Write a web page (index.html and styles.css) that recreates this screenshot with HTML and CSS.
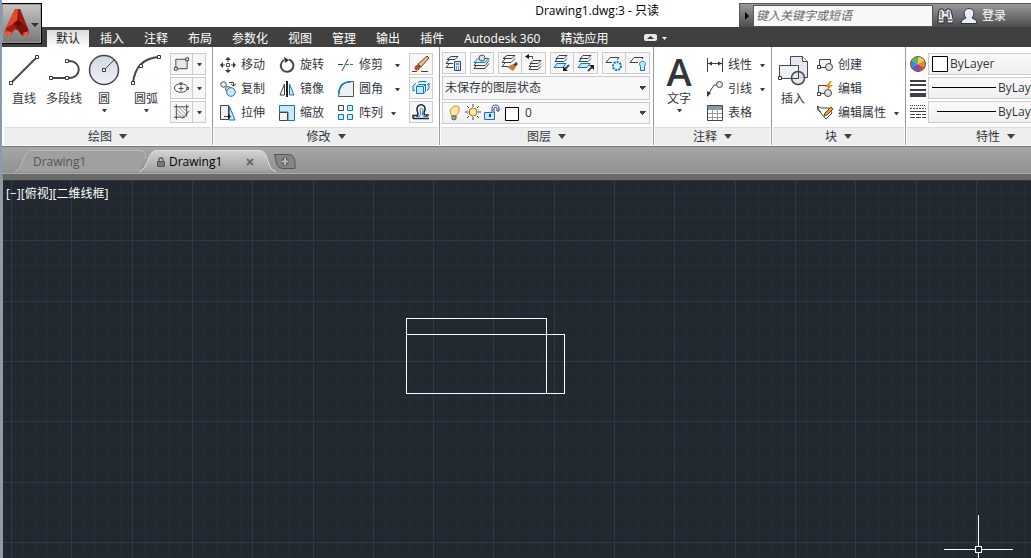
FILE: index.html
```html
<!DOCTYPE html>
<html lang="zh-CN">
<head>
<meta charset="utf-8">
<title>Drawing1.dwg:3 - 只读</title>
<link rel="stylesheet" href="styles.css">
</head>
<body>
<div class="window">
  <header class="top">
    <button class="app-button" aria-label="应用程序菜单">
      <svg width="38" height="38" viewBox="0 0 38 38">
        <path d="M13 4h5l8 20 1 4-3 3-5-1-3-5h-4l-3 5-4 1-2-4 1-4z" fill="#c22a18"/>
        <path d="M13 4h3l1 12-7 6-6 1z" fill="#df4a2c"/>
        <path d="M4 23l7-4 3-3 2 5-5 4-2 5-4-1-1-2z" fill="#a81c10"/>
        <path d="M16 4h2l8 20-8-5-3-4z" fill="#9b1a10"/>
        <path d="M16 16l9 6 2 5-2 3h-5l-4-5-3-3z" fill="#7c120b"/>
        <path d="M11 19l5-4 4 4-4 2z" fill="#5c0d08"/>
        <path d="M4 26l6 1-2 4-4-1zM21 28l6-2-2 5h-3z" fill="#f0583a"/>
        <path d="M29 18h8l-4 4z" fill="#2b323b"/>
      </svg>
    </button>
    <div class="titlebar">
      <div class="title">Drawing1.dwg:3 - 只读</div>
      <div class="infocenter">
        <button class="info-toggle" aria-label="折叠"><svg width="6" height="8"><path d="M1 0l4 4-4 4z" fill="#000"/></svg></button>
        <input class="search" type="text" aria-label="搜索" placeholder="键入关键字或短语">
        <button class="info-button" aria-label="查找"><svg width="16" height="16" viewBox="0 0 16 16"><path d="M2 2l2-1h2l1 2h2l1-2h2l2 1 2 9v4h-6V9H7v6H1v-4z" fill="#dfe5ee" stroke="#252a33"/><path d="M4 3v7M12 3v7M7 5h3M1 12h5M10 12h5" stroke="#252a33" fill="none"/></svg></button>
        <button class="info-button sign-in"><svg width="16" height="16" viewBox="0 0 16 16"><path d="M5 10C1 5 4 .5 8 .5S15 5 11 10l4 2 1 3.500H0L1 12z" fill="#e8edf5" stroke="#30343b"/></svg><span>登录</span></button>
      </div>
    </div>
    <nav class="ribbon-tabs">
      <button class="rtab active">默认</button><button class="rtab">插入</button><button class="rtab">注释</button><button class="rtab">布局</button><button class="rtab">参数化</button><button class="rtab">视图</button><button class="rtab">管理</button><button class="rtab">输出</button><button class="rtab">插件</button><button class="rtab">Autodesk 360</button><button class="rtab">精选应用</button>
      <button class="collapse" aria-label="最小化功能区"><svg width="26" height="8" viewBox="0 0 26 8"><rect width="13" height="7" rx="2" fill="#e3e6ec"/><path d="M3 5l3.500-3L10 5z" fill="#333"/><path d="M18 3h5l-2.500 3z" fill="#eef"/></svg></button>
    </nav>
  </header>

  <main class="ribbon">
    <section class="panel draw">
      <div class="body">
        <button class="big"><svg width="34" height="34" viewBox="0 0 34 34"><path d="M4 30L30 4" class="k"/><path d="M2.500 28.500h3v3h-3zM28.500 2.500h3v3h-3z" class="n"/></svg><span>直线</span></button>
        <button class="big"><svg width="34" height="34" viewBox="0 0 34 34"><path d="M4 25h18c13 0 13-17 0-17h-2" class="k"/><path d="M2.500 23.500h3v3h-3zM18.500 23.500h3v3h-3zM18.500 6.500h3v3h-3z" class="n"/></svg><span>多段线</span></button>
        <button class="big"><svg width="34" height="34" viewBox="0 0 34 34"><defs><linearGradient id="disc" x2="0" y2="1"><stop stop-color="#d3d7e0"/><stop offset="1" stop-color="#f0f2f6"/></linearGradient></defs><circle cx="17" cy="17" r="14.500" fill="url(#disc)" stroke="#45494f" stroke-width="1.500"/><path d="M17 17L27 7" class="t"/><path d="M15.500 15.500h3v3h-3z" class="n"/></svg><span>圆</span><i class="caret"></i></button>
        <button class="big wide"><svg width="34" height="34" viewBox="0 0 34 34"><path d="M4 30C6 12 16 5 30 4" class="k"/><path d="M2.500 28.500h3v3h-3zM10.500 11.500h3v3h-3zM28.500 2.500h3v3h-3z" class="n"/></svg><span>圆弧</span><i class="caret"></i></button>
        <div class="stack">
          <button class="split" aria-label="矩形"><svg width="18" height="16" viewBox="0 0 18 16"><path d="M3 3h12v10H3z" fill="#e2e6ed" stroke="#444"/><path d="M1.500 11.500h3v3h-3zM13.500 1.500h3v3h-3z" class="n"/></svg><i class="caret"></i></button>
          <button class="split" aria-label="椭圆"><svg width="18" height="16" viewBox="0 0 18 16"><ellipse cx="8.500" cy="8" rx="7" ry="4.500" class="t"/><path d="M6 8.500h5M8.500 6v5" class="t"/><path d="M7.500 2.500h2v2h-2zM14.500 7.500h2v2h-2z" class="n"/></svg><i class="caret"></i></button>
          <button class="split" aria-label="图案填充"><svg width="18" height="16" viewBox="0 0 18 16"><path d="M3.500 0v16M14.500 0v13M1 2.500h16M1 13.500h12M10 15l7-8" class="t"/><path d="M4 5l8 8M4 9l4 4M6 3l8 8M10 3l4 4" stroke="#888"/></svg><i class="caret"></i></button>
        </div>
      </div>
      <button class="foot">绘图<i class="down"></i></button>
    </section>

    <section class="panel modify">
      <div class="body">
        <div class="col"><button class="item"><svg width="16" height="16" viewBox="0 0 16 16"><path d="M6.500 6.500h3v3h-3zM8 3v2M8 11v2M3 8h2M11 8h2" class="t"/><path d="M8 0l3 3H5zM8 16l3-3H5zM0 8l3-3v6zM16 8l-3-3v6z" fill="#333"/></svg>移动</button>
        <button class="item"><svg width="16" height="16" viewBox="0 0 16 16"><circle cx="3.500" cy="3.500" r="2.800" fill="#e8ebf0" stroke="#555"/><circle cx="8" cy="8" r="2.500" fill="#e8ebf0" stroke="#555"/><circle cx="11" cy="11" r="4.300" class="b"/><path d="M9 1.500h4.500V5M11 3l2.500 2L16 3" class="t"/></svg>复制</button>
        <button class="item"><svg width="16" height="16" viewBox="0 0 16 16"><path d="M9.500 1.500L15 15H9z" class="b"/><path d="M.5.500h8v14h-8z" fill="#f0f2f5" stroke="#444"/><path d="M4 11.500h6" class="t"/><path d="M8 8.500l3 3-3 3z" fill="#222"/></svg>拉伸</button></div>
        <div class="col"><button class="item"><svg width="16" height="16" viewBox="0 0 16 16"><path d="M10 2.500a6.300 6.300 0 1 1-5 .5" class="k"/><path d="M5 0l5 3-4 3z" fill="#333"/></svg>旋转</button>
        <button class="item"><svg width="16" height="16" viewBox="0 0 16 16"><path d="M5.500 3v11H1z" class="t"/><path d="M10.500 3L15 14h-4.500z" class="b"/><path d="M8 0v16" stroke="#222" stroke-width="2"/></svg>镜像</button>
        <button class="item"><svg width="16" height="16" viewBox="0 0 16 16"><path d="M.5.500h15v15H9V7H.5z" class="b"/><path d="M.5 7.500h8v8h-8z" fill="#f2f3f5" stroke="#444"/></svg>缩放</button></div>
        <div class="col"><button class="item"><svg width="16" height="16" viewBox="0 0 16 16"><path d="M4 14L10 2M0 7.500h5" class="t"/><path d="M8 7.500h8" stroke="#0878c4" stroke-dasharray="3 1"/></svg>修剪<i class="caret push"></i></button>
        <button class="item"><svg width="16" height="16" viewBox="0 0 16 16"><path d="M.5 15.500Q.5.500 13 .5h2.500v15z" fill="#edf0f4" stroke="#555"/><path d="M.8 13Q1 1 13 .8" stroke="#0878c4" stroke-width="1.500" fill="none"/></svg>圆角<i class="caret push"></i></button>
        <button class="item"><svg width="16" height="16" viewBox="0 0 16 16"><path d="M.5.500h5v5h-5z" fill="#eee" stroke="#444"/><path d="M9.500.500h5v5h-5zM.5 9.500h5v5h-5zM9.500 9.500h5v5h-5z" class="b"/></svg>阵列<i class="caret near"></i></button></div>
        <div class="stack">
          <button class="square" aria-label="删除"><svg width="18" height="18" viewBox="0 0 18 18"><path d="M15 1l2 2-8 9-3-3z" fill="#e7bd83" stroke="#664b30"/><path d="M6 9l3 3-2 2-4-2z" fill="#4b5159"/><circle cx="5" cy="13" r="2.500" fill="#ce491b"/><path d="M0 16.500h5M9 16.500h7" class="t"/></svg></button>
          <button class="square" aria-label="分解"><svg width="18" height="18" viewBox="0 0 18 18"><path d="M4.500 7.500h7v7h-7zM4.500 7.500l2-2h7l-2 2M11.500 14.500l2-2v-7M3 11L1 12V7l3-3M6 3.500l2-1h6l-1 1M15 6l2-2v5l-2 3" class="b"/></svg></button>
          <button class="square" aria-label="偏移"><svg width="18" height="18" viewBox="0 0 18 18"><path d="M1 15.500h16M1 15.500v-3h3c3 0 2-3 1-5C4 0 14 0 13 7c-1 2-2 5 1 5h3" fill="none" stroke="#222" stroke-width="1.500"/><path d="M4 13.500h3c2-1 2-3 1-6 0-3 3-3 3 0-1 3-1 5 1 6h4" stroke="#0878c4" fill="none"/></svg></button>
        </div>
      </div>
      <button class="foot">修改<i class="down"></i></button>
    </section>

    <section class="panel layers">
      <div class="body">
        <div class="tools">
          <button class="square" aria-label="图层特性"><svg width="18" height="18" viewBox="0 0 18 18"><path d="M6 2.500h7l-3 3H2zM4 6l-3 3.500h7M4 10l-3 3.500h7" class="t"/><path d="M9.500 7.500h6v9h-6z" fill="#dce8f5" stroke="#284b73"/><path d="M11 10h3M11 13h1M13 13h1M11 15h1M13 15h1" stroke="#284b73"/></svg></button>
          <button class="square" aria-label="置为当前"><svg width="18" height="18" viewBox="0 0 18 18"><path d="M5 4.500h11l-4 4H1z" class="b"/><path d="M3 9l-2 2.500h11l4-5M3 12l-2 2.500h11l4-5" class="t"/><circle cx="9" cy="4" r="3" fill="#ddd" stroke="#555"/></svg></button>
          <div class="pair"><button class="square" aria-label="匹配图层"><svg width="18" height="18" viewBox="0 0 18 18"><path d="M6 1.500h8l-3 3H2zM4 5L1 8.500h9l4-4M4 9l-3 3.500h6" class="t"/><path d="M15 8l2 2-3 3-2-2z" fill="#53402f"/><path d="M12 10l3 3-3 4-6-4z" fill="#c77b31"/></svg></button>
          <button class="square" aria-label="上一个"><svg width="18" height="18" viewBox="0 0 18 18"><path d="M8 6.500h8l-3 3H5zM6 10l-2 2.500h9l3-3M6 13l-2 2.500h9l3-3M3 2.500h4.500V5" class="t"/><path d="M0 2.500L4 0v5z" fill="#111"/></svg></button></div>
          <div class="pair"><button class="square" aria-label="隔离"><svg width="18" height="18" viewBox="0 0 18 18"><path d="M6 1.500h8l-3 3H3zM4 5L2 7.500h9l3-3" class="t"/><path d="M4 9.500h9l-3 4H1z" class="b"/><path d="M16 11l-4 4" class="k"/><path d="M10 17v-5l5 5z" fill="#222"/></svg></button>
          <button class="square" aria-label="取消隔离"><svg width="18" height="18" viewBox="0 0 18 18"><path d="M6 1.500h8l-3 3H3zM4 5L2 7.500h9l3-3" class="t"/><path d="M4 9.500h9l-3 4H1z" class="b"/><path d="M11 17l4-4" class="k"/><path d="M17 11v5l-5-5z" fill="#222"/></svg></button></div>
          <div class="pair"><button class="square" aria-label="冻结"><svg width="18" height="18" viewBox="0 0 18 18"><path d="M7 8.500H1l4-5h9L12 6" class="t"/><circle cx="12" cy="12" r="4" fill="#dff2ff" stroke="#0878c4" stroke-width="2" stroke-dasharray="2 1"/></svg></button>
          <button class="square" aria-label="关闭"><svg width="18" height="18" viewBox="0 0 18 18"><path d="M9 8.500H1l4-5h9L13 5" class="t"/><path d="M11.500 12.500c-4-7 8-7 4 0v4h-4z" class="b"/></svg></button></div>
        </div>
        <select class="box state" aria-label="图层状态"><option>未保存的图层状态</option></select>
        <div class="box combo">
          <svg width="72" height="18" viewBox="0 0 72 18"><path d="M5 12C-2 3 14-2 12 6c0 3-2 4-3 6z" fill="#ffe89a" stroke="#b29548"/><path d="M5 12h4v3l-2 1-2-1z" fill="#aaa" stroke="#555"/><circle cx="26" cy="8" r="4" fill="#ffe698" stroke="#997733"/><path d="M26 0v3M26 13v3M18 8h3M31 8h3M20 2l2 2M30 12l2 2M32 2l-2 2M22 12l-2 2" class="t"/><path d="M37.500 8.500h10v7h-10z" class="b"/><path d="M45 9V4c0-4 7-4 7 0v3h-2V4c0-1-3-1-3 0v5" fill="#eef" stroke="#264764"/><path d="M43 10v3" stroke="#264764" stroke-width="2"/><path d="M58.500 3.500h13v13h-13z" fill="#fff" stroke="#000"/></svg>
          <select aria-label="图层"><option>0</option></select>
        </div>
      </div>
      <button class="foot">图层<i class="down"></i></button>
    </section>

    <section class="panel annotate">
      <div class="body">
        <button class="big"><b class="letter">A</b><span>文字</span><i class="caret"></i></button>
        <div class="col"><button class="item"><svg width="16" height="16" viewBox="0 0 16 16"><path d="M.5 1v14M15.500 1v14M1 6.500h14" class="t"/><path d="M1 6.500l4-2v4zM15 6.500l-4-2v4z" fill="#333"/></svg>线性<i class="caret push"></i></button>
        <button class="item"><svg width="16" height="16" viewBox="0 0 16 16"><circle cx="12.500" cy="3.500" r="3" fill="#e4e6eb" stroke="#444"/><path d="M9 4H7L2 12" class="t"/><path d="M0 16v-6l4 2z" fill="#333"/></svg>引线<i class="caret push"></i></button>
        <button class="item"><svg width="16" height="16" viewBox="0 0 16 16"><path d="M.5.500h15v15H.5z" fill="#fff" stroke="#444"/><path d="M1 1h14v3H1z" fill="#8299b2"/><path d="M1 4.500h14M1 8.500h14M1 12.500h14M5.500 4v11M10.500 4v11" stroke="#999"/></svg>表格</button></div>
      </div>
      <button class="foot">注释<i class="down"></i></button>
    </section>

    <section class="panel block">
      <div class="body">
        <button class="big"><svg width="34" height="34" viewBox="0 0 34 34"><path d="M14.500 3.500h12l5 5v16h-17z" fill="#e5e8ee" stroke="#45494f"/><path d="M26.500 3.500v5h5M3.500 12.500h19v13h-19z" fill="#edf0f4" stroke="#45494f"/><circle cx="22" cy="25" r="6.500" fill="#dfe4eb" fill-opacity=".8" stroke="#45494f" stroke-width="1.500"/><path d="M15 25.500h7.500V18" class="t"/><path d="M2.500 23.500h3v3h-3z" class="n"/></svg><span>插入</span></button>
        <div class="col"><button class="item"><svg width="16" height="16" viewBox="0 0 16 16"><path d="M2.500 2.500h11v8h-11z" fill="#edf0f4" stroke="#444"/><circle cx="12" cy="10" r="3.500" fill="#dfe4eb" stroke="#444"/><path d="M.5 8.500h3v3h-3z" class="n"/></svg>创建</button>
        <button class="item"><svg width="16" height="16" viewBox="0 0 16 16"><path d="M1.500 4.500h10v8h-10z" fill="#edf0f4" stroke="#444"/><circle cx="11" cy="12" r="3.500" fill="#dfe4eb" stroke="#444"/><path d="M13 0L8 6h4l-3 4 7-6h-4l3-4z" fill="#ef8b17"/><path d="M.5 11.500h3v3h-3z" class="n"/></svg>编辑</button>
        <button class="item"><svg width="16" height="16" viewBox="0 0 16 16"><path d="M0 1l4 2h8l3 5-6 6-6-7zM0 1l1 4 3 2" class="t"/><path d="M14 2l2 2-6 6-3 1 1-3z" fill="#ef9a28" stroke="#68431b"/></svg>编辑属性<i class="caret near"></i></button></div>
      </div>
      <button class="foot">块<i class="down"></i></button>
    </section>

    <section class="panel properties">
      <div class="body">
        <div class="prop"><svg width="18" height="18" viewBox="0 0 18 18"><path d="M9 9V1l7 4z" fill="#e1da44"/><path d="M9 9l7-4v8z" fill="#ee8630"/><path d="M9 9l7 4-7 4z" fill="#cf3e61"/><path d="M9 9v8l-7-4z" fill="#6a55bb"/><path d="M9 9l-7 4V5z" fill="#368cce"/><path d="M9 9L2 5l7-4z" fill="#65b94d"/><circle cx="9" cy="9" r="7.500" fill="none" stroke="#555"/></svg>
          <div class="box combo"><svg width="18" height="18"><path d="M1.500 1.500h15v15h-15z" fill="#fff" stroke="#000"/></svg><select aria-label="颜色"><option>ByLayer</option></select></div></div>
        <div class="prop"><svg width="18" height="18" viewBox="0 0 18 18"><path d="M1 2h16M1 6h16M1 11h16" stroke="#3d4045" stroke-width="2"/><path d="M1 16h16" stroke="#3d4045" stroke-width="4"/></svg>
          <div class="box combo"><svg width="66" height="18"><path d="M1 8.500h64" stroke="#000"/></svg><select aria-label="线宽"><option>ByLayer</option></select></div></div>
        <div class="prop"><svg width="18" height="18" viewBox="0 0 18 18"><path d="M1 2.500h16" stroke="#444" stroke-dasharray="1 1"/><path d="M1 5.500h16" stroke="#444" stroke-dasharray="2 1"/><path d="M1 8.500h16" stroke="#444"/><path d="M1 11.500h16M1 14.500h16" stroke="#444" stroke-dasharray="5 1"/></svg>
          <div class="box combo"><svg width="66" height="18"><path d="M6 8.500h59" stroke="#000"/></svg><select aria-label="线型"><option>ByLayer</option></select></div></div>
      </div>
      <button class="foot">特性<i class="down"></i></button>
    </section>
  </main>

  <nav class="doc-tabs">
    <button class="doc first"><svg class="shape" viewBox="0 0 134 24" preserveAspectRatio="none"><path d="M0 22.500C8 21 8 1.500 16 1.500h108q7 0 7 8l-8 13z" fill="#a0a0a0"/><path d="M0 22.500C8 21 8 1.500 16 1.500h108q7 0 7 8" fill="none" stroke="#bdbdbd"/></svg><span>Drawing1</span></button>
    <button class="doc current"><svg class="shape" viewBox="0 0 138 24" preserveAspectRatio="none"><defs><linearGradient id="tabfill" x2="0" y2="1"><stop stop-color="#d2d2d2"/><stop offset="1" stop-color="#a2a2a2"/></linearGradient></defs><path d="M0 22.500C9 21 9 1.500 17 1.500h104c9 0 6 19 16 21z" fill="url(#tabfill)"/><path d="M0 22.500C9 21 9 1.500 17 1.500h104c9 0 6 19 16 21" fill="none" stroke="#dedede"/></svg><svg width="8" height="10"><path d="M2 5V3c0-3 4-3 4 0v2" fill="none" stroke="#666" stroke-width="1.500"/><path d="M.5 4.500h7v5h-7z" fill="#777" stroke="#555"/></svg><span>Drawing1</span><svg class="close" width="8" height="8"><path d="M1 1l6 6M7 1L1 7" stroke="#6b6b6b" stroke-width="2"/></svg></button>
    <button class="add" aria-label="新建"><svg width="24" height="18" viewBox="0 0 24 18"><path d="M1.500 1.500H16q6 1 6 8v6H10Q4 15 3 8z" fill="#858585" stroke="#555"/><path d="M12 4.500v8M8 8.500h8" stroke="#555" stroke-width="4"/><path d="M12 5v7M8.500 8.500h7" stroke="#bbb" stroke-width="2"/></svg></button>
  </nav>

  <section class="viewport">
    <svg class="drawing" aria-label="绘图区">
      <path id="minor" stroke="#262d38" fill="none"/>
      <path id="major" stroke="#303749" fill="none"/>
      <path d="M403.500 138.500h140v75h-140zM403.500 154.500h158v59h-158z" stroke="#fff" fill="none"/>
      <path d="M941 369.500h31M979 369.500h31M975.500 335v31M975.500 373v6M972.500 366.500h6v6h-6z" stroke="#fff" fill="none"/>
    </svg>
    <div class="view-controls"><button>[−]</button><button>[俯视]</button><button>[二维线框]</button></div>
  </section>
</div>
<script src="grid.js"></script>
</body>
</html>
```
FILE: grid.js
```js
// Fills the drawing area with minor grid lines and a major line every fifth step.
const svg = document.querySelector('.drawing');
const step = 12.06;
function drawGrid() {
  const w = svg.clientWidth;
  const h = svg.clientHeight;
  let minor = '';
  let major = '';
  for (let i = 0; 8 + i * step < w; i++) {
    const line = `M${Math.round(8 + i * step) + 0.5} 0V${h}`;
    if (i % 5 === 0) major += line; else minor += line;
  }
  for (let i = 0; i * step < h; i++) {
    const line = `M0 ${Math.round(i * step) + 0.5}H${w}`;
    if (i % 5 === 0) major += line; else minor += line;
  }
  document.getElementById('minor').setAttribute('d', minor);
  document.getElementById('major').setAttribute('d', major);
}
drawGrid();
window.addEventListener('resize', drawGrid);
```
FILE: styles.css
```css
* { box-sizing: border-box; }
body {
  margin: 0;
  font: 12px/16px "Open Sans", "Noto Sans CJK SC", sans-serif;
  color: #33373d;
}
button, select, input { font: inherit; color: inherit; margin: 0; }
button { padding: 0; border: 0; background: none; white-space: nowrap; }
svg { display: block; flex: none; }

/* Icon strokes: k bold, t thin, n grip square, b blue part */
.k { fill: none; stroke: #45494f; stroke-width: 2; }
.t { fill: none; stroke: #3d4147; }
.n { fill: #fff; stroke: #33373d; }
.b { fill: #cfe8f8; stroke: #0878c4; }

.window {
  display: flex;
  flex-direction: column;
  height: 100vh;
  overflow: hidden;
  border-left: 2px solid #8b9bab;
  background: #fff;
}

/* Title bar and ribbon tabs */
.top { position: relative; flex: none; }
.app-button {
  position: absolute;
  left: -1px;
  top: 3px;
  width: 41px;
  height: 41px;
  border: 1px solid #000;
  background: linear-gradient(#c5c5c5, #777);
  box-shadow: inset 0 0 0 1px #999;
}
.titlebar { display: flex; height: 27px; }
.title {
  flex: 1;
  padding: 3px 80px 0 0;
  text-align: right;
  color: #000;
}
.infocenter {
  display: flex;
  align-items: center;
  flex: none;
  width: 292px;
  margin-top: 3px;
  border-top: 1px solid #555;
  background: linear-gradient(#999, #4d4d4d);
}
.info-toggle { display: flex; justify-content: center; align-items: center; width: 14px; height: 100%; border-left: 1px solid #555; }
.search {
  width: 180px;
  height: 22px;
  padding: 0 2px;
  border: 1px solid #555;
  border-radius: 0;
  background: #f8f8f8;
  font-style: italic;
}
.search::placeholder { color: #666; opacity: 1; }
.info-button { display: flex; align-items: center; gap: 5px; padding: 0 4px; color: #fff; }
.ribbon-tabs { display: flex; height: 20px; padding-left: 44px; background: #404040; color: #fff; }
.rtab { padding: 4px 10px 0; }
.rtab.active {
  margin: 3px 1px 0;
  padding: 1px 9px 0;
  background: linear-gradient(#dcdcdc, #fff);
  color: #222;
}
.collapse { padding: 2px 0 0 26px; }

/* Ribbon */
.ribbon { display: flex; flex: none; height: 99px; padding-left: 1px; border-bottom: 1px solid #fff; }
.panel { display: flex; flex-direction: column; flex: none; border-right: 1px solid #999; }
.panel .body { display: flex; height: 80px; padding-top: 6px; }
.foot {
  display: flex;
  justify-content: center;
  align-items: center;
  gap: 7px;
  height: 18px;
  margin: 0 1px;
  background: #eee;
  border-top: 1px solid #ddd;
}
.down { border: 4px solid transparent; border-top: 5px solid #3d4045; border-bottom: 0; }
.caret { width: 5px; border: 2px solid transparent; border-top: 3px solid #3d4045; border-bottom: 0; }
.draw { width: 210px; }
.modify { width: 227px; }
.layers { width: 214px; }
.annotate { width: 118px; }
.block { width: 134px; }
.properties { width: 180px; }
.big { display: flex; flex-direction: column; align-items: center; width: 40px; height: 66px; }
.big.wide { width: 44px; }
.big span { height: 22px; padding-top: 4px; }
.letter { height: 34px; font: 600 38px/36px "Open Sans", sans-serif; }
.stack { display: grid; grid-template-rows: repeat(3, 22px); row-gap: 2px; }
.split { display: flex; align-items: center; width: 36px; border: 1px solid #ccc; background: #f7f7f7; }
.split svg { width: 22px; padding: 0 2px; border-right: 1px solid #ccc; height: 20px; }
.split .caret { margin-left: 4px; }
.draw .body { padding-left: 1px; }
.draw .stack { padding-left: 2px; }
.col { display: grid; grid-template-rows: repeat(3, 24px); }
.item { display: flex; align-items: center; gap: 5px; text-align: left; }
.item .caret { flex: none; }
.item .push { margin-left: 7px; }
.item .near { margin-left: 3px; }
.modify .body { padding-left: 7px; }
.modify .col { width: 59px; }
.modify .col:nth-child(3) { width: 71px; }
.square { display: flex; justify-content: center; align-items: center; width: 24px; height: 22px; border: 1px solid #ccc; background: #f7f7f7; }
.layers .body { flex-direction: column; padding: 5px 3px 0 2px; }
.tools { display: flex; justify-content: space-between; margin-bottom: 2px; }
.pair { display: flex; }
.pair .square + .square { border-left: 0; }
.box {
  height: 22px;
  border: 1px solid #ccc;
  border-radius: 0;
  background: linear-gradient(#fafafa, #f0f0f0);
}
select {
  appearance: none;
  padding: 0 16px 0 2px;
}
.state { flex: none; height: 24px; margin-bottom: 2px; }
.layers .body select {
  background: linear-gradient(45deg, transparent 50%, #3d4045 50%) no-repeat right 6px center / 4px 4px, linear-gradient(-45deg, transparent 50%, #3d4045 50%) no-repeat right 2px center / 4px 4px, #f7f7f7;
}
.combo { display: flex; align-items: center; }
.combo select { flex: 1; min-width: 0; height: 20px; border: 0; background: transparent; }
.layers .combo svg { margin-left: 4px; }
.layers .combo select { padding-left: 6px; }
.annotate .big { width: 50px; }
.annotate .col { padding-left: 3px; }
.annotate .item .push { margin-left: 3px; }
.block .big { width: 42px; }
.block .col { padding-left: 3px; }
.properties .body { flex-direction: column; gap: 2px; padding: 6px 0 0 3px; }
.prop { display: flex; align-items: center; gap: 1px; }
.prop .box { flex: 1; }
.prop .combo svg { margin-left: 2px; }
.prop .combo select { padding-left: 1px; }

/* Drawing tabs */
.doc-tabs {
  display: flex;
  align-items: flex-end;
  flex: none;
  height: 28px;
  padding-left: 13px;
  border-bottom: 1px solid #ababab;
  border-top: 1px solid #777;
  background: linear-gradient(#a6a6a6, #929292);
}
.doc { position: relative; display: flex; align-items: center; height: 24px; padding-top: 1px; color: #555; }
.doc span { position: relative; }
.shape { position: absolute; inset: 0; width: 100%; height: 100%; }
.doc > svg:not(.shape) { position: relative; }
.first { width: 134px; padding-left: 18px; }
.current { width: 138px; margin-left: -10px; padding-left: 18px; gap: 4px; color: #000; }
.close { margin-left: 20px; }
.add { align-self: flex-end; padding-bottom: 2px; margin-left: -4px; }

/* Model space */
.viewport {
  position: relative;
  flex: 1;
  min-height: 0;
  border-top: 6px double #777;
  border-left: 1px solid #999;
  background: #212830;
}
.viewport { border-top: 6px solid #6a6a68; }
.drawing { width: 100%; height: 100%; shape-rendering: crispEdges; }
.view-controls { position: absolute; left: 3px; top: 6px; display: flex; color: #fff; }
```
